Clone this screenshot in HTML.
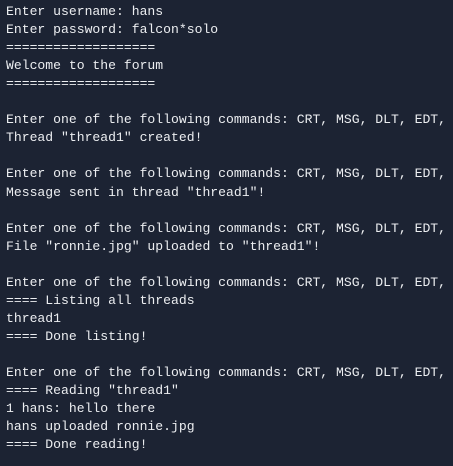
<!DOCTYPE html>
<html><head><meta charset="utf-8"><style>
html,body{margin:0;padding:0;width:453px;height:466px;overflow:hidden;background:#1c2333;position:relative;}
pre{margin:0;position:absolute;left:6px;top:-15px;width:447px;overflow:hidden;font-family:"Liberation Mono","DejaVu Sans Mono",monospace;font-size:13.1px;line-height:18.05px;color:#eceef1;white-space:pre;}
.g{color:#6dc23a}.b{color:#4a8fd6}
</style></head><body>
<pre><span class="g">    ,      ,</span><span class="b">          ,    ,    ,     ,      ,     ,       ,</span>
Enter username: hans
Enter password: falcon*solo
===================
Welcome to the forum
===================

Enter one of the following commands: CRT, MSG, DLT, EDT,
Thread "thread1" created!

Enter one of the following commands: CRT, MSG, DLT, EDT,
Message sent in thread "thread1"!

Enter one of the following commands: CRT, MSG, DLT, EDT,
File "ronnie.jpg" uploaded to "thread1"!

Enter one of the following commands: CRT, MSG, DLT, EDT,
==== Listing all threads
thread1
==== Done listing!

Enter one of the following commands: CRT, MSG, DLT, EDT,
==== Reading "thread1"
1 hans: hello there
hans uploaded ronnie.jpg
==== Done reading!
</pre>
</body></html>
